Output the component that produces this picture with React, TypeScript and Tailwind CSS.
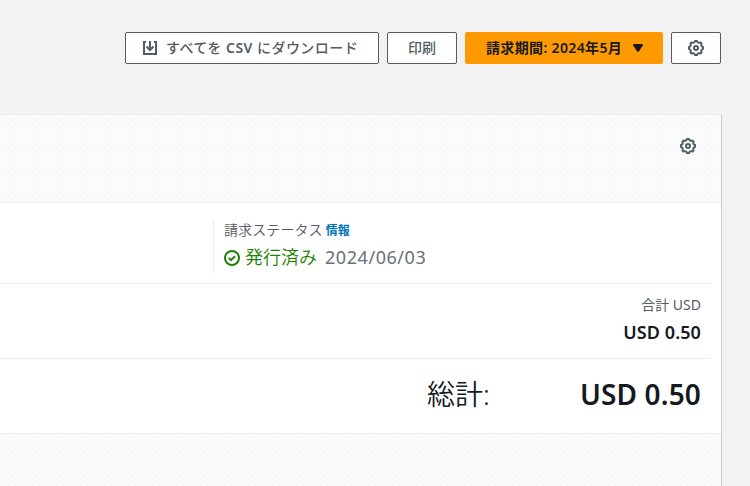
import type { ReactNode } from "react"
import clsx from "clsx"

const font = "font-['Noto_Sans','Noto_Sans_CJK_JP',sans-serif]"
const dots = "bg-[radial-gradient(circle,#f7f7f7_0.7px,transparent_1px),radial-gradient(circle,#f7f7f7_0.7px,transparent_1px)] bg-[length:6px_6px] bg-[position:0_0,3px_3px]"

export default function App() {
  return (
    <div className={clsx("flex h-[486px] w-[750px] flex-col overflow-hidden bg-[#f2f2f2] text-[#16191f]", font)}>
      <div className="flex h-[114px] shrink-0 items-start justify-end gap-2 pt-8 pr-[29px]">
        <Button className="w-[254px] justify-start pl-4">
          <DownloadIcon />
          <span className="ml-2 tracking-[0.45px]">すべてを <span className="font-semibold">CSV</span> にダウンロード</span>
        </Button>
        <Button className="w-[70px] justify-center">印刷</Button>
        <Button primary className="w-[198px] justify-start pl-5">
          <span className="tracking-[0.35px]">請求期間: 2024年5月</span>
          <svg viewBox="0 0 16 16" className="ml-2 size-4" fill="currentColor" stroke="currentColor" strokeWidth="2" strokeLinejoin="round">
            <path d="M4 5h8l-4 6z" />
          </svg>
        </Button>
        <Button className="w-[50px] justify-center">
          <GearIcon />
        </Button>
      </div>

      <div className="mr-7 flex grow flex-col border-t border-r border-t-[#eaeded] border-r-[#c9cdcd] bg-white">
        <div className={clsx("flex h-[88px] shrink-0 items-start justify-end border-b border-[#eaeded] bg-[#fbfbfb] pt-[23px] pr-[25px] text-[#545b64]", dots)}>
          <GearIcon />
        </div>

        <div className="mr-2.5 flex h-[81px] shrink-0 items-start border-b border-[#eaeded] pt-[17px] pl-[213px]">
          <div className="h-[53px] border-l border-[#eaeded] pl-2.5">
            <div className="flex h-5 items-center text-sm text-[#545b64]">
              <span className="font-[350] tracking-[0.1px]">請求ステータス</span>
              <span className="ml-[3px] pt-px text-xs font-bold text-[#0073bb]">情報</span>
            </div>
            <div className="mt-2 flex h-5 items-center text-lg">
              <CheckIcon />
              <span className="mb-0.5 ml-[5px] font-[350] text-[#1d8102]">発行済み</span>
              <span className="mb-0.5 ml-2 tracking-[0.55px] text-[#687078]">2024/06/03</span>
            </div>
          </div>
        </div>

        <div className="mr-2.5 flex h-[75px] shrink-0 flex-col items-end border-b border-[#eaeded] pt-[11px] pr-2.5">
          <div className="flex h-5 items-center text-sm text-[#545b64]">合計 USD</div>
          <div className="mt-[5px] flex h-6 items-center text-lg font-semibold tracking-[0.1px]">USD 0.50</div>
        </div>

        <div className="flex h-[75px] shrink-0 items-center justify-end border-b border-[#eaeded] pr-5 pb-1 text-[28px]">
          <span className="font-[350]">総計:</span>
          <span className="ml-[90px] font-semibold tracking-[0.15px]">USD 0.50</span>
        </div>

        <div className={clsx("grow bg-[#fbfbfb]", dots)} />
      </div>
    </div>
  )
}

function Button({ children, primary, className }: { children: ReactNode; primary?: boolean; className?: string }) {
  return (
    <button
      className={clsx(
        "flex h-8 items-center rounded-xs border text-sm whitespace-nowrap",
        primary ? "border-[#ff9900] bg-[#ff9900] font-semibold text-[#16191f]" : "border-[#545b64] bg-white font-medium text-[#545b64]",
        className
      )}
    >
      {children}
    </button>
  )
}

function DownloadIcon() {
  return (
    <svg viewBox="0 0 16 16" className="size-4" fill="none" stroke="currentColor" strokeWidth="2">
      <path d="M4 2H2v12h12V2h-2M8 1v9M4.5 6.5 8 10l3.5-3.5" />
    </svg>
  )
}

function GearIcon() {
  return (
    <svg viewBox="0 0 16 16" className="size-4" fill="none" stroke="currentColor" strokeWidth="2" strokeLinejoin="round">
      <path d="M6.3 2.4 7 1h2l.7 1.4 1.4.5 1.4-.4 1.1 1.1-.4 1.4.5 1.4L15 7v2l-1.3.6-.5 1.4.4 1.4-1.1 1.1-1.4-.4-1.4.5L9 15H7l-.7-1.4-1.4-.5-1.4.4-1.1-1.1.4-1.4-.5-1.4L1 9V7l1.3-.6.5-1.4-.4-1.4 1.1-1.1 1.4.4z" />
      <circle cx="8" cy="8" r="2" />
    </svg>
  )
}

function CheckIcon() {
  return (
    <svg viewBox="0 0 16 16" className="size-4 text-[#1d8102]" fill="none" stroke="currentColor" strokeWidth="2">
      <circle cx="8" cy="8" r="7" />
      <path d="m4.8 8 2.2 2.2 4-4" />
    </svg>
  )
}
